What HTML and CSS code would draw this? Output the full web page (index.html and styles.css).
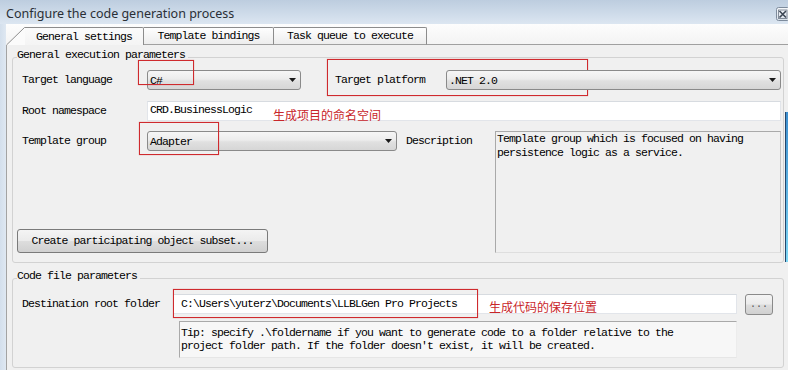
FILE: index.html
```html
<!DOCTYPE html>
<html>
<head>
<meta charset="utf-8">
<link rel="stylesheet" href="styles.css">
</head>
<body>
<div class="window">
  <div class="titlebar">
    <span class="title">Configure the code generation process</span>
    <span class="close-btn">
      <svg width="14" height="14" viewBox="0 0 14 14">
        <defs>
          <linearGradient id="cg" x1="0" y1="0" x2="0" y2="1">
            <stop offset="0" stop-color="#f6f8fb"/>
            <stop offset="1" stop-color="#d9e1ea"/>
          </linearGradient>
        </defs>
        <rect x="0.5" y="0.5" width="13" height="13" rx="2" fill="url(#cg)" stroke="#7d8b9c"/>
        <path d="M3.5 4 L10 10.5 M10 4 L3.5 10.5" stroke="#3b4553" stroke-width="1.6"/>
        <rect x="2.5" y="3" width="8.5" height="8.5" fill="none" stroke="#6c7785" stroke-width="0.8"/>
      </svg>
    </span>
  </div>
  <div class="body">
    <div class="frame-left"></div>
    <div class="workspace">
      <div class="tabs">
        <div class="tab tab-active">
          <svg class="tab-slant" width="19" height="18" viewBox="0 0 19 18">
            <polygon points="0,18 18.5,0.5 19,0.5 19,18" fill="#fbfbfb"/>
            <path d="M0.5 18 L18.5 0.5 H19" stroke="#8c8c8c" fill="none"/>
          </svg>
          <span class="tab-label tab-label-active">General settings</span>
        </div>
        <div class="tab tab-label tab-bindings">Template bindings</div>
        <div class="tab tab-label tab-queue">Task queue to execute</div>
        <div class="tab-fill"></div>
      </div>
      <div class="page">
        <fieldset class="group group-exec">
          <legend class="group-title">General execution parameters</legend>
          <div class="exec-grid">
            <div class="label lbl-lang">Target language</div>
            <div class="combo combo-lang">
              <span class="combo-text">C#</span>
              <svg class="arrow" width="7" height="4" viewBox="0 0 7 4"><polygon points="0,0 7,0 3.5,4" fill="#1a1a1a"/></svg>
              <span class="mark mark-lang"></span>
            </div>
            <div class="label lbl-platform">Target platform<span class="mark mark-platform"></span></div>
            <div class="combo combo-platform">
              <span class="combo-text">.NET 2.0</span>
              <svg class="arrow" width="7" height="4" viewBox="0 0 7 4"><polygon points="0,0 7,0 3.5,4" fill="#1a1a1a"/></svg>
            </div>

            <div class="label lbl-ns">Root namespace</div>
            <div class="textbox textbox-ns">
              <span class="tb-text">CRD.BusinessLogic</span>
              <span class="note note-ns">生成项目的命名空间</span>
            </div>

            <div class="label lbl-group">Template group</div>
            <div class="combo combo-group">
              <span class="combo-text">Adapter</span>
              <svg class="arrow" width="7" height="4" viewBox="0 0 7 4"><polygon points="0,0 7,0 3.5,4" fill="#1a1a1a"/></svg>
              <span class="mark mark-group"></span>
            </div>
            <div class="label lbl-desc">Description</div>
            <div class="desc-box">Template group which is focused on having<br>persistence logic as a service.</div>

            <div class="button btn-subset">Create participating object subset...</div>
          </div>
        </fieldset>

        <fieldset class="group group-code">
          <legend class="group-title">Code file parameters</legend>
          <div class="code-grid">
            <div class="label lbl-dest">Destination root folder</div>
            <div class="textbox textbox-dest">
              <span class="tb-text">C:\Users\yuterz\Documents\LLBLGen Pro Projects</span>
              <span class="mark mark-dest"></span>
              <span class="note note-dest">生成代码的保存位置</span>
            </div>
            <div class="button btn-browse">...</div>
            <div class="tip-box">Tip: specify .\foldername if you want to generate code to a folder relative to the<br>project folder path. If the folder doesn't exist, it will be created.</div>
          </div>
        </fieldset>
      </div>
    </div>
    <div class="edge-deco"></div>
  </div>
</div>
</body>
</html>
```

FILE: styles.css
```css
* { box-sizing: border-box; }
html, body { margin: 0; padding: 0; }
body {
  width: 788px;
  height: 370px;
  overflow: hidden;
  background: #f0f0f0;
}
.window {
  width: 788px;
  height: 370px;
  display: flex;
  flex-direction: column;
  overflow: hidden;
  font-family: "Liberation Mono", "DejaVu Sans Mono", monospace;
  font-size: 11.5px;
  letter-spacing: -0.9px;
  color: #000;
}
.titlebar {
  height: 24px;
  flex: none;
  display: flex;
  align-items: center;
  justify-content: space-between;
  padding-left: 6px;
  background: linear-gradient(#bdcddf, #cfdcea 60%, #dce6f1);
}
.title {
  font-family: "Noto Sans", "Open Sans", sans-serif;
  font-size: 12.5px;
  letter-spacing: 0;
  color: #2a2f36;
  margin-top: 3px;
}
.close-btn {
  display: flex;
  margin-right: -2px;
  margin-top: 3px;
}
.body {
  flex: 1;
  display: flex;
  position: relative;
  min-height: 0;
}
.frame-left {
  width: 6px;
  flex: none;
  background: linear-gradient(90deg, #d3dfec, #dfe8f2);
}
.workspace {
  flex: 1;
  display: flex;
  flex-direction: column;
  min-width: 0;
}
.tabs {
  height: 21px;
  flex: none;
  display: flex;
  align-items: flex-end;
  background: linear-gradient(#fdfdfd, #f3f3f3);
}
.tab {
  height: 18px;
  display: flex;
  align-items: stretch;
}
.tab-slant { display: block; flex: none; }
.tab-label {
  display: flex;
  align-items: center;
  justify-content: center;
  height: 18px;
  border-top: 1px solid #8c8c8c;
  border-right: 1px solid #8c8c8c;
  border-top-right-radius: 2px;
  padding-bottom: 1px;
  white-space: nowrap;
}
.tab-label-active {
  width: 119px;
  background: linear-gradient(#fbfbfb, #f4f4f4);
}
.tab-bindings, .tab-queue {
  height: 18px;
  border-bottom: 1px solid #a0a0a0;
  background: linear-gradient(#fefefe, #ededed);
}
.tab-bindings { width: 130px; }
.tab-queue { width: 153px; }
.tab-fill {
  flex: 1;
  height: 1px;
  background: #a0a0a0;
}
.page {
  flex: 1;
  border-left: 1px solid #a3a3a3;
  background: #f0f0f0;
  padding: 4px 4px 0 5px;
}
.group {
  margin: 0;
  border: 1px solid #d2d2d2;
  border-radius: 3px;
  padding: 5px 2px 9px 4px;
  min-width: 0;
}
.group-title {
  padding: 0 3px 4px 0;
  line-height: 12px;
  height: 16px;
}
.group-code {
  margin-top: 7px;
  padding-top: 8px;
}
.exec-grid {
  display: grid;
  grid-template-columns: 130px 154px 34px 62px 9px 40px 49px 286px;
  grid-template-rows: 21px 20px 20px 58px 24px;
  row-gap: 10px;
}
.label {
  line-height: 20px;
  padding-left: 5px;
  white-space: nowrap;
  align-self: start;
  position: relative;
}
.lbl-lang { grid-column: 1; grid-row: 1; }
.lbl-platform { grid-column: 4 / span 3; grid-row: 1; padding-left: 0; }
.lbl-ns { grid-column: 1; grid-row: 2; }
.lbl-group { grid-column: 1; grid-row: 3; }
.lbl-desc { grid-column: 6 / span 2; grid-row: 3; padding-left: 0; }

.combo {
  position: relative;
  height: 20px;
  align-self: start;
  display: flex;
  align-items: center;
  justify-content: space-between;
  border: 1px solid #8a8a8a;
  border-radius: 3px;
  background: linear-gradient(#f6f6f6, #ececec 45%, #e0e0e0 55%, #d6d6d6);
  padding: 0 4px 0 2px;
}
.combo-text { white-space: nowrap; }
.arrow { display: block; }
.combo-lang { grid-column: 2; grid-row: 1; }
.combo-platform { grid-column: 7 / span 2; grid-row: 1; }
.combo-group { grid-column: 2 / span 3; grid-row: 3; }

.textbox {
  position: relative;
  height: 20px;
  display: flex;
  align-items: center;
  background: #fff;
  border: 1px solid #e2e5ea;
  border-top-color: #d7dbe0;
  padding-left: 2px;
  white-space: nowrap;
}
.textbox-ns { grid-column: 2 / -1; grid-row: 2; }
.tb-text { line-height: 14px; margin-top: -2px; }

.desc-box {
  grid-column: 8;
  grid-row: 3 / span 3;
  border: 1px solid #a9a9a9;
  border-right-color: #c4c4c4;
  border-bottom-color: #dedede;
  background: #f0f0f0;
  padding: 0 0 0 1px;
  line-height: 14px;
}

.button {
  display: flex;
  align-items: center;
  justify-content: center;
  border: 1px solid #7a7a7a;
  border-radius: 3px;
  background: linear-gradient(#f4f4f4, #ebebeb 48%, #dddddd 52%, #d0d0d0);
  white-space: nowrap;
}
.btn-subset {
  grid-column: 1 / span 3;
  grid-row: 5;
  width: 251px;
  padding-bottom: 1px;
}

.code-grid {
  display: grid;
  grid-template-columns: 156px 564px 8px 28px;
  grid-template-rows: 21px 37px;
  row-gap: 6px;
}
.lbl-dest { grid-column: 1; grid-row: 1; }
.textbox-dest { grid-column: 2; grid-row: 1; padding-left: 7px; }
.textbox-dest .tb-text { margin-top: 0; }
.btn-browse {
  grid-column: 4;
  grid-row: 1;
  height: 21px;
  font-size: 10px;
  color: #555;
  letter-spacing: 0;
  border-color: #8a8a8a;
}
.tip-box {
  grid-column: 2 / -1;
  grid-row: 2;
  margin-left: 6px;
  width: 558px;
  border: 1px solid #a9a9a9;
  border-right-color: #ececec;
  border-bottom-color: #e6e6e6;
  background: #f7f7f7;
  padding: 4px 0 0 1px;
  line-height: 13px;
  white-space: nowrap;
  overflow: hidden;
}

.mark {
  position: absolute;
  border: 1px solid #cf2a2e;
  box-shadow: 0 0 1px rgba(207, 42, 46, 0.5);
  pointer-events: none;
}
.mark-lang { left: -10px; top: -11px; width: 56px; height: 25px; }
.mark-platform { left: -8px; top: -11px; width: 261px; height: 37px; }
.mark-group { left: -9px; top: -10px; width: 80px; height: 33px; }
.mark-dest { left: -1px; top: -6px; width: 305px; height: 29px; }

.note {
  position: absolute;
  font-family: "Noto Sans CJK SC", sans-serif;
  font-size: 12px;
  line-height: 14px;
  letter-spacing: 0;
  color: #c8262a;
}
.note-ns { left: 125px; top: 6px; }
.note-dest { left: 315px; top: 5px; }

.edge-deco {
  position: absolute;
  right: 0;
  top: 88px;
  width: 3px;
  height: 150px;
  border-left: 1px solid #24466b;
  background: linear-gradient(#3d8fcf, #7ed6f4);
}
```
